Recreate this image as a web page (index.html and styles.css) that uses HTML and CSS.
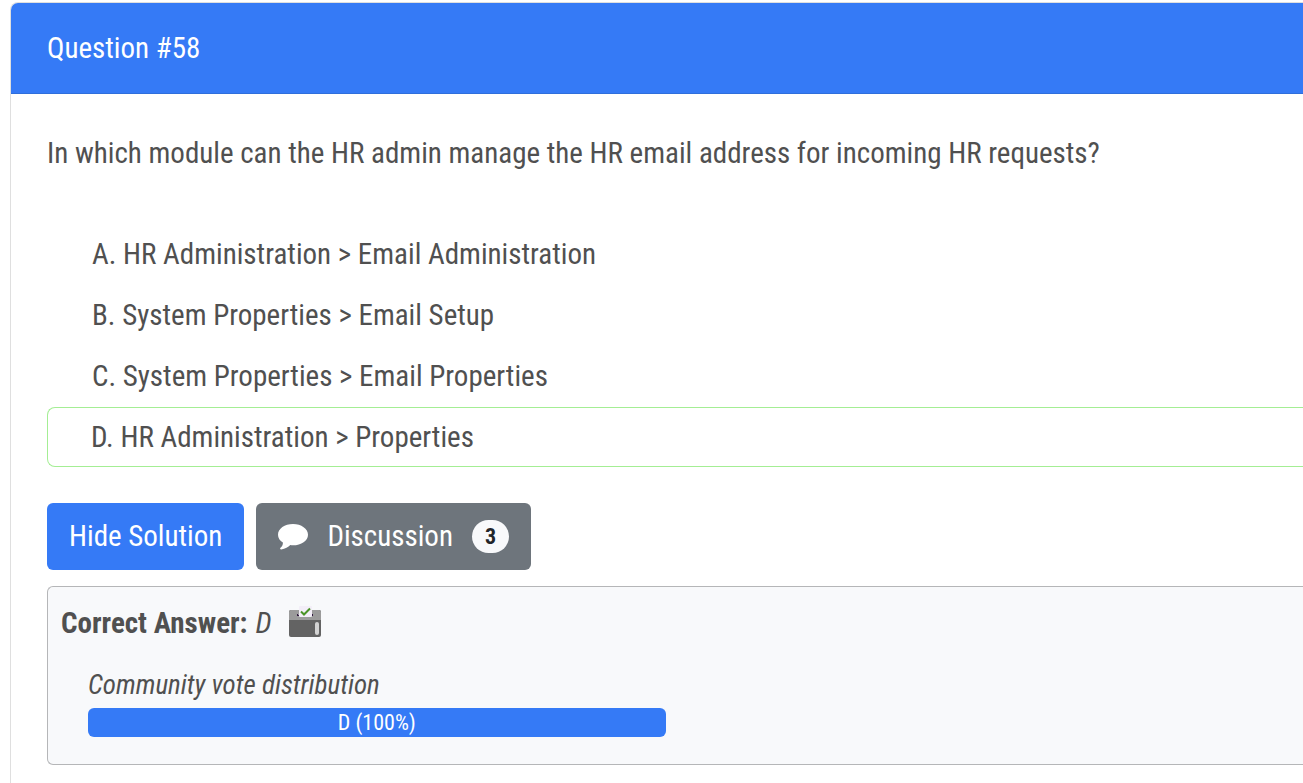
FILE: index.html
```html
<!DOCTYPE html>
<html lang="en">
<head>
<meta charset="utf-8">
<title>Question #58</title>
<link rel="stylesheet" href="styles.css">
</head>
<body>
<main class="card">
  <header class="card-header">Question #58</header>
  <div class="card-body">
    <p class="question">In which module can the HR admin manage the HR email address for incoming HR requests?</p>
    <ul class="choices">
      <li class="choice">A. HR Administration &gt; Email Administration</li>
      <li class="choice">B. System Properties &gt; Email Setup</li>
      <li class="choice">C. System Properties &gt; Email Properties</li>
      <li class="choice correct">D. HR Administration &gt; Properties</li>
    </ul>
    <div class="actions">
      <button class="btn primary" type="button">Hide Solution</button>
      <button class="btn secondary" type="button">
        <svg class="bubble" viewBox="0 0 30 26" aria-hidden="true"><path fill="#fff" d="M15 0C6.700 0 0 4.700 0 10.700c0 3.100 1.900 6 4.900 7.900.2 2.200-.8 3.900-2.400 5.200-.8.700-.3 1.700.7 1.600 4.100-.4 7-2 9.100-4.300.9.200 1.800.2 2.700.2 8.300 0 15-4.700 15-10.600S23.300 0 15 0Z"/></svg>
        <span>Discussion</span>
        <span class="badge">3</span>
      </button>
    </div>
    <section class="solution">
      <p class="answer"><strong>Correct Answer:</strong> <em>D</em>
        <svg class="ballot" viewBox="0 0 32 34" aria-hidden="true">
          <rect x="0" y="4" width="32" height="27" rx="2" fill="#636363"/>
          <path fill="#9b9b9b" d="M2 4h28a2 2 0 0 1 2 2v8H0V6a2 2 0 0 1 2-2Z"/>
          <path fill="#321b41" d="M8 8h16v2H8z"/>
          <path fill="#9b9b9b" d="M9 6h14v3H9z"/>
          <rect x="10" y="0" width="13" height="11" rx="1" fill="#f3eef8"/>
          <path fill="none" stroke="#4a9427" stroke-width="2" d="m12 5.500 3 3 6-6"/>
          <rect x="26" y="16" width="4" height="13" rx="2" fill="#d3d3d3"/>
        </svg>
      </p>
      <div class="votes">
        <p class="vote-title">Community vote distribution</p>
        <div class="vote-bar">D (100%)</div>
      </div>
    </section>
  </div>
</main>
</body>
</html>
```
FILE: styles.css
```css
* { box-sizing: border-box; }
body {
  margin: 0;
  font-family: "Roboto Condensed", Roboto, sans-serif;
  font-size: 29px;
  line-height: 44px;
  color: #505050;
  background: #fff;
  overflow-x: hidden;
}
p, ul { margin: 0; padding: 0; }
.card {
  margin: 2px 0 0 10px;
  border: 1px solid #dfdfdf;
  border-width: 1px 0 0 1px;
  border-radius: 8px 0 0 0;
}
.card-header {
  padding: 23px 36px;
  color: #fff;
  background: #357af6;
  border-bottom: 1px solid #2f6edb;
  border-radius: 7px 0 0 0;
}
.card-body { padding: 37px 0 18px 36px; }
.choices { margin-top: 49px; list-style: none; }
.choice { padding: 8px 45px; margin-bottom: 1px; }
.correct {
  padding: 7px 43px;
  border: 1px solid #a4ee94;
  border-right: 0;
  border-radius: 8px 0 0 8px;
}
.actions { display: flex; gap: 12px; margin-top: 36px; }
.btn {
  display: flex;
  align-items: center;
  height: 67px;
  padding: 0 22px 2px;
  font: inherit;
  color: #fff;
  border: 0;
  border-radius: 6px;
}
.primary { background: #357af6; }
.secondary { gap: 19px; background: #6e757c; }
.bubble { width: 30px; height: 26px; margin-top: 2px; }
.badge {
  margin-top: 2px;
  padding: 0 13px;
  font-size: 22px;
  font-weight: 700;
  line-height: 33px;
  color: #212529;
  background: #f8f9fb;
  border-radius: 17px;
}
.solution {
  margin-top: 16px;
  padding: 14px 13px 27px;
  background: #f8f9fb;
  border: 1px solid #b5b6b8;
  border-right: 0;
  border-radius: 6px 0 0 6px;
}
.answer { display: flex; align-items: center; gap: 8px; }
.ballot { width: 32px; height: 34px; margin-left: 9px; }
.votes { width: 47%; margin: 20px 0 0 27px; }
.vote-title { font-size: 27px; line-height: 40px; font-style: italic; }
.vote-bar {
  margin-top: 3px;
  font-size: 22px;
  line-height: 29px;
  text-align: center;
  color: #fff;
  background: #357af6;
  border-radius: 6px;
}
```
